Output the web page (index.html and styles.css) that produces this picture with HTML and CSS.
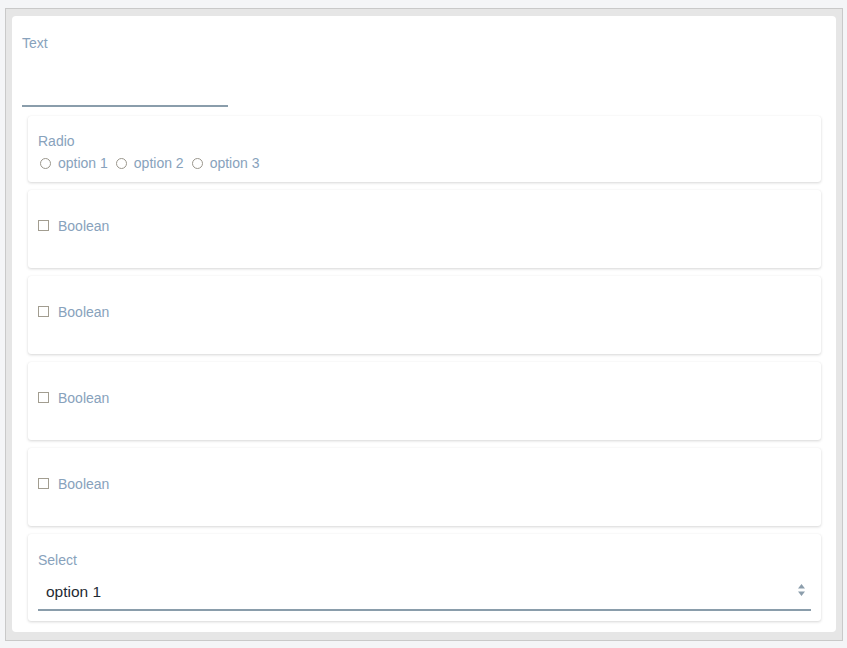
FILE: index.html
```html
<!DOCTYPE html>
<html>
<head>
<meta charset="utf-8">
<link rel="stylesheet" href="styles.css">
</head>
<body>
<div class="frame">
  <div class="form">
    <div class="field-label">Text</div>
    <div class="text-input"></div>

    <div class="card radio-card">
      <div class="field-label">Radio</div>
      <div class="radio-row">
        <span class="radio"></span><span class="opt">option 1</span>
        <span class="radio"></span><span class="opt">option 2</span>
        <span class="radio"></span><span class="opt">option 3</span>
      </div>
    </div>

    <div class="card bool-card"><span class="check"></span><span class="opt">Boolean</span></div>
    <div class="card bool-card"><span class="check"></span><span class="opt">Boolean</span></div>
    <div class="card bool-card"><span class="check"></span><span class="opt">Boolean</span></div>
    <div class="card bool-card"><span class="check"></span><span class="opt">Boolean</span></div>

    <div class="card select-card">
      <div class="field-label">Select</div>
      <div class="select">
        <span class="select-value">option 1</span>
        <svg class="arrows" width="7" height="12" viewBox="0 0 7 12"><path d="M3.5 0 L7 4.5 L0 4.5 Z M0 7.5 L7 7.5 L3.5 12 Z" fill="#8c9eac"/></svg>
      </div>
    </div>
  </div>
</div>
</body>
</html>
```

FILE: styles.css
```css
* { box-sizing: border-box; }
html, body { margin: 0; }
body {
  background: #f4f5f7;
  padding: 8px 4px 7px 5px;
  font-family: "Liberation Sans", Arial, sans-serif;
  font-size: 14px;
}
.frame {
  border: 1px solid #c9c9c9;
  background: #e6e6e6;
  padding: 7px 6px 8px 6px;
  height: 633px;
}
.form {
  background: #fff;
  border-radius: 4px;
  padding: 19px 15px 11px 10px;
  display: flex;
  flex-direction: column;
}
.field-label {
  color: #88a2bc;
  line-height: 16px;
  height: 16px;
}
.text-input {
  width: 206px;
  height: 56px;
  border-bottom: 2px solid #8a9dab;
  margin-bottom: 9px;
}
.card {
  margin-left: 6px;
  background: #fff;
  border-radius: 3px;
  box-shadow: 0 1px 3px rgba(0,0,0,0.16), 0 0 1px rgba(0,0,0,0.06);
  padding: 0 10px;
}
.card + .card { margin-top: 8px; }
.radio-card {
  height: 66px;
  padding-top: 17px;
}
.radio-row {
  margin-top: 6px;
  display: flex;
  align-items: center;
  height: 16px;
  padding-left: 2px;
}
.radio {
  width: 11px;
  height: 11px;
  border: 1px solid #9a968c;
  border-radius: 50%;
  margin-right: 7px;
  flex: none;
}
.opt {
  color: #88a2bc;
  line-height: 16px;
  margin-right: 8px;
}
.bool-card {
  height: 78px;
  display: flex;
  align-items: center;
  padding-top: 4px;
  padding-bottom: 10px;
}
.check {
  width: 11px;
  height: 11px;
  border: 1px solid #a29d90;
  margin-right: 9px;
  margin-top: -2px;
  flex: none;
}
.select-card {
  height: 87px;
  padding-top: 18px;
}
.select {
  margin-top: 2px;
  height: 41px;
  border-bottom: 2px solid #8a9dab;
  display: flex;
  align-items: center;
  justify-content: space-between;
  padding: 3px 6px 0 8px;
}
.select-value {
  color: #1e2a33;
  font-size: 15.5px;
  padding-top: 1px;
}
.arrows { display: block; margin-top: -2px; }
```
